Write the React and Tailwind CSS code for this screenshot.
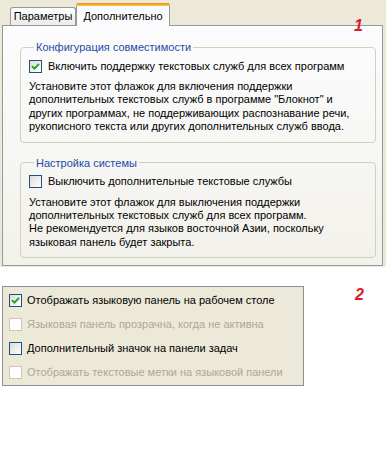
import React from 'react';

const font = { fontFamily: '"Liberation Sans", Arial, sans-serif' };

const Check = ({ checked, disabled }) => (
  <span
    className={`inline-flex w-[13px] h-[13px] shrink-0 items-center justify-center border ${
      disabled
        ? 'border-[#CAC8BB] bg-white'
        : 'border-[#1C5180] bg-gradient-to-br from-[#DCDCD7] to-white'
    }`}
  >
    {checked && (
      <svg width="9" height="9" viewBox="0 0 9 9">
        <path d="M1 4.2 L3.4 6.6 L8 1.8" fill="none" stroke="#21A121" strokeWidth="1.9" />
      </svg>
    )}
  </span>
);

const Group = ({ title, label, checked, children, className }) => (
  <fieldset className={`border border-[#D0D0BF] rounded-[4px] pl-[8px] pr-[6px] pb-[8px] ${className}`}>
    <legend className="ml-[5px] px-[2px] text-[#1E4AA8] leading-[14px]">{title}</legend>
    <div className="flex items-center gap-[6px] mt-[5px] h-[14px]">
      <Check checked={checked} />
      <span className="text-black">{label}</span>
    </div>
    <p className="mt-[7px] leading-[13.4px] text-black">{children}</p>
  </fieldset>
);

const Item = ({ checked, disabled, children }) => (
  <div className="flex items-center gap-[5px] h-[24px]">
    <Check checked={checked} disabled={disabled} />
    <span className={disabled ? 'text-[#ACA899]' : 'text-black'}>{children}</span>
  </div>
);

export default function App() {
  return (
    <div className="relative w-[386px] h-[465px] bg-white text-[11px]" style={font}>
      {/* Dialog tab page */}
      <div className="bg-[#ECE9D8] pl-[2px] pr-[3px] pt-[3px] pb-[1px]">
        <div className="flex items-end h-[22px] pl-[8px]">
          <div className="h-[18px] w-[66px] border border-b-0 border-[#919B9C] rounded-t-[3px] bg-gradient-to-b from-white to-[#ECEBE6] flex items-center justify-center text-black">
            Параметры
          </div>
          <div className="relative z-10 -mb-px h-[23px] w-[94px] border border-b-0 border-[#919B9C] rounded-t-[3px] bg-[#FCFCFE] flex flex-col">
            <div className="h-[3px] -mx-px -mt-px rounded-t-[3px] bg-gradient-to-b from-[#E68B2C] to-[#FFC83C]" />
            <div className="flex-1 flex items-center justify-center text-black">Дополнительно</div>
          </div>
        </div>
        <div className="h-[241px] border border-[#919B9C] bg-gradient-to-b from-[#FCFCFE] to-[#F2F1EA] pl-[17px] pr-[6px] pt-[14px]">
          <Group
            title="Конфигурация совместимости"
            label="Включить поддержку текстовых служб для всех программ"
            checked
          >
            Установите этот флажок для включения поддержки
            <br />
            дополнительных текстовых служб в программе "Блокнот" и
            <br />
            других программах, не поддерживающих распознавание речи,
            <br />
            рукописного текста или других дополнительных служб ввода.
          </Group>
          <Group
            title="Настройка системы"
            label="Выключить дополнительные текстовые службы"
            className="mt-[13px]"
          >
            Установите этот флажок для выключения поддержки
            <br />
            дополнительных текстовых служб для всех программ.
            <br />
            Не рекомендуется для языков восточной Азии, поскольку
            <br />
            языковая панель будет закрыта.
          </Group>
        </div>
      </div>

      {/* Language bar options */}
      <div className="ml-[2px] mt-[19px] w-[302px] border border-[#8E8F8F] bg-[#ECE9D8] pl-[6px] py-[1px]">
        <Item checked>Отображать языковую панель на рабочем столе</Item>
        <Item disabled>Языковая панель прозрачна, когда не активна</Item>
        <Item>Дополнительный значок на панели задач</Item>
        <Item disabled>Отображать текстовые метки на языковой панели</Item>
      </div>

      {/* annotations */}
      <span className="absolute left-[354px] top-[14px] text-[16px] font-bold italic text-[#D8202C]">1</span>
      <span className="absolute left-[355px] top-[283px] text-[16px] font-bold italic text-[#D8202C]">2</span>
    </div>
  );
}
